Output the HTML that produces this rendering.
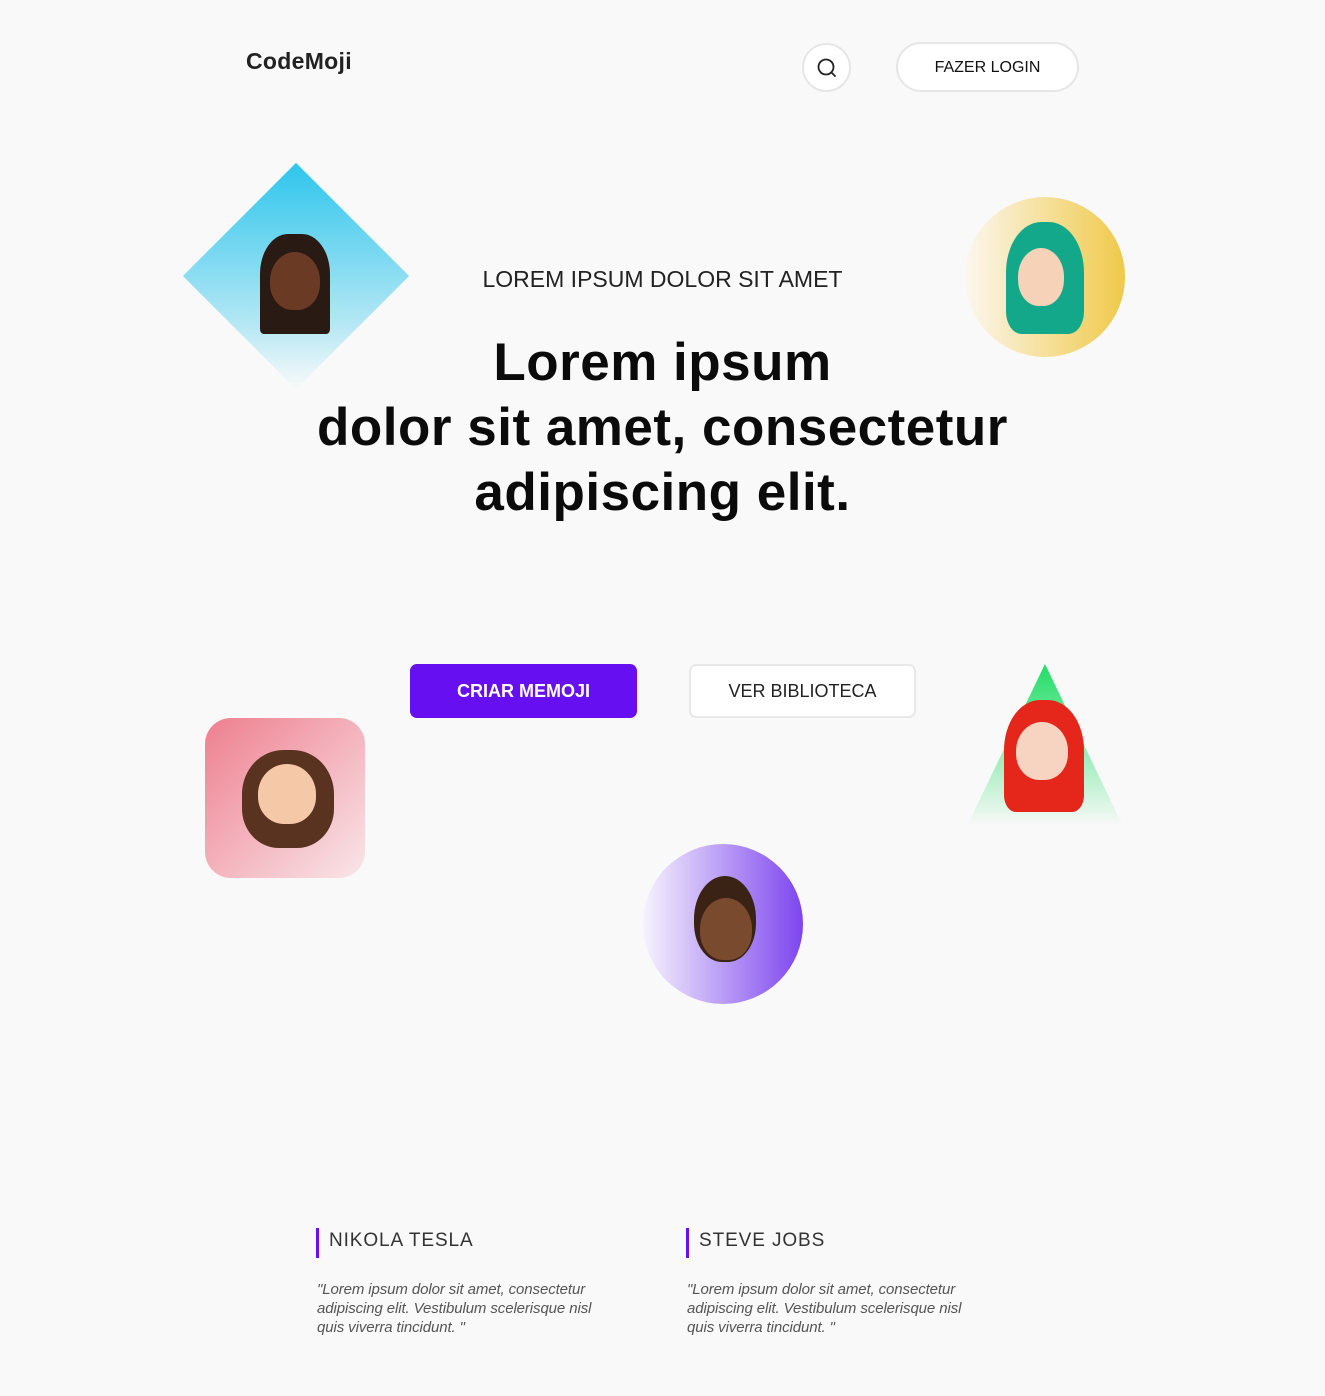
<!DOCTYPE html>
<html><head><meta charset="utf-8"><style>
*{margin:0;padding:0;box-sizing:border-box}
body{width:1325px;height:1396px;background:#f9f9f9;position:relative;overflow:hidden;font-family:"Liberation Sans",sans-serif;color:#111}
.a{position:absolute}
.logo{left:246px;top:48px;font-size:23px;font-weight:bold;color:#222;letter-spacing:.3px}
.search{left:802px;top:43px;width:49px;height:49px;border-radius:50%;border:2px solid #e6e6e6;background:#fff}
.login{left:896px;top:42px;width:183px;height:50px;border-radius:25px;border:2px solid #e6e6e6;background:#fff;font-size:16px;text-align:center;line-height:48px;color:#111}
.sub{left:0;width:1325px;text-align:center;top:266px;font-size:23px;color:#222}
.h1{left:0;width:1325px;text-align:center;top:330px;font-size:53px;font-weight:bold;line-height:65px;color:#0b0b0b;letter-spacing:.5px}
.b1{left:410px;top:664px;width:227px;height:54px;border-radius:7px;background:#6610f2;color:#fff;font-weight:bold;font-size:18px;text-align:center;line-height:54px}
.b2{left:689px;top:664px;width:227px;height:54px;border-radius:7px;background:#fff;border:2px solid #e8e8e8;color:#222;font-size:18px;text-align:center;line-height:50px}
.name{top:1228px;height:30px;border-left:3px solid #6610f2;padding-left:10px;font-size:19px;letter-spacing:.9px;color:#333;line-height:26px}
.q{top:1280px;width:300px;font-size:15px;font-style:italic;color:#555;line-height:19px;letter-spacing:-.1px}
.face{position:absolute;border-radius:50% 50% 45% 45%}
</style></head><body>
<div class="a logo">CodeMoji</div>
<div class="a search"><svg width="45" height="45" viewBox="0 0 45 45"><circle cx="22" cy="22" r="7.5" fill="none" stroke="#222" stroke-width="1.8"/><path d="M27.5 27.5 L31 31" stroke="#222" stroke-width="1.8" stroke-linecap="round"/></svg></div>
<div class="a login">FAZER LOGIN</div>

<div class="a" style="left:216px;top:196px;width:160px;height:160px;transform:rotate(45deg);background:linear-gradient(135deg,#2ec5ec,rgba(46,197,236,0.35) 70%,rgba(249,249,249,0))"></div>
<div class="face" style="left:260px;top:234px;width:70px;height:100px;background:#2a1a14;border-radius:40% 40% 5% 5%"></div>
<div class="face" style="left:270px;top:252px;width:50px;height:58px;background:#6b3a25"></div>

<div class="a" style="left:965px;top:197px;width:160px;height:160px;border-radius:50%;background:linear-gradient(90deg,#fbf7ee,#f0c94a)"></div>
<div class="face" style="left:1006px;top:222px;width:78px;height:112px;background:#14a88a;border-radius:45% 45% 20% 20%"></div>
<div class="face" style="left:1018px;top:248px;width:46px;height:58px;background:#f6d2b8"></div>

<div class="a sub">LOREM IPSUM DOLOR SIT AMET</div>
<div class="a h1">Lorem ipsum<br>dolor sit amet, consectetur<br>adipiscing elit.</div>

<div class="a b1">CRIAR MEMOJI</div>
<div class="a b2">VER BIBLIOTECA</div>

<div class="a" style="left:205px;top:718px;width:160px;height:160px;border-radius:26px;background:linear-gradient(135deg,#ee7f8f,#f9e6e9)"></div>
<div class="face" style="left:242px;top:750px;width:92px;height:98px;background:#5a3320;border-radius:45% 45% 40% 40%"></div>
<div class="face" style="left:258px;top:764px;width:58px;height:60px;background:#f5c9a7"></div>

<svg class="a" style="left:965px;top:664px" width="160" height="165"><defs><linearGradient id="g" x1="0" y1="0" x2="0" y2="1"><stop offset="0" stop-color="#22dd66"/><stop offset="1" stop-color="#22dd66" stop-opacity="0"/></linearGradient></defs><polygon points="80,0 158,162 2,162" fill="url(#g)"/></svg>
<div class="face" style="left:1004px;top:700px;width:80px;height:112px;background:#e5261b;border-radius:45% 45% 15% 15%"></div>
<div class="face" style="left:1016px;top:722px;width:52px;height:58px;background:#f7d4c2"></div>

<div class="a" style="left:643px;top:844px;width:160px;height:160px;border-radius:50%;background:linear-gradient(90deg,#f6f3fd,#7d45ee)"></div>
<div class="face" style="left:694px;top:876px;width:62px;height:86px;background:#3a2214"></div>
<div class="face" style="left:700px;top:898px;width:52px;height:62px;background:#7a4a2e"></div>

<div class="a name" style="left:316px">NIKOLA TESLA</div>
<div class="a name" style="left:686px">STEVE JOBS</div>
<div class="a q" style="left:317px">"Lorem ipsum dolor sit amet, consectetur adipiscing elit. Vestibulum scelerisque nisl quis viverra tincidunt. "</div>
<div class="a q" style="left:687px">"Lorem ipsum dolor sit amet, consectetur adipiscing elit. Vestibulum scelerisque nisl quis viverra tincidunt. "</div>
</body></html>
